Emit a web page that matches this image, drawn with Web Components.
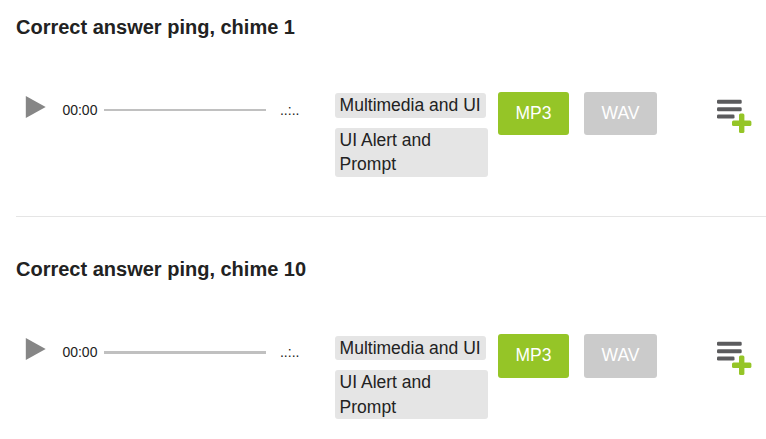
<!DOCTYPE html>
<html lang="en">
<head>
<meta charset="utf-8">
<title>Sounds</title>
<style>
  body {
    margin: 0;
    background: #fff;
    color: #222;
    font-family: "Liberation Sans", Arial, sans-serif;
    overflow: hidden;
  }
</style>
</head>
<body>
<sound-list>
  <sound-item>
    <span slot="title">Correct answer ping, chime 1</span>
    <sound-tag slot="tags">Multimedia and UI</sound-tag>
    <sound-tag slot="tags">UI Alert and Prompt</sound-tag>
  </sound-item>
  <sound-item>
    <span slot="title">Correct answer ping, chime 10</span>
    <sound-tag slot="tags">Multimedia and UI</sound-tag>
    <sound-tag slot="tags">UI Alert and Prompt</sound-tag>
  </sound-item>
</sound-list>

<script>
function attach(element, html) {
  element.attachShadow({mode: 'open'}).innerHTML = html;
}

class SoundList extends HTMLElement {
  constructor() {
    super();
    attach(this, `
      <style>
        :host {
          display: flex;
          flex-direction: column;
          gap: 25.5px;
          padding-left: 16px;
        }
        ::slotted(:not(:last-child)) { border-bottom: 1px solid #e5e5e5; }
      </style>
      <slot></slot>
    `);
  }
}

// One sound: title on top, then player, tags, downloads and playlist button.
class SoundItem extends HTMLElement {
  constructor() {
    super();
    attach(this, `
      <style>
        :host {
          display: block;
          box-sizing: border-box;
          height: 217px;
          padding-top: 15.8px;
        }
        h3 {
          margin: 0 0 53px;
          font-size: 20px;
          line-height: 23px;
        }
        .row {
          display: grid;
          grid-template-columns: 319px 163px 219px 1fr;
          align-items: start;
        }
        .tags {
          display: flex;
          flex-direction: column;
          align-items: flex-start;
          gap: 10px;
          width: 153px;
          padding-top: 1.4px;
        }
        .downloads { display: flex; gap: 15px; }
      </style>
      <h3><slot name="title"></slot></h3>
      <div class="row">
        <audio-player></audio-player>
        <div class="tags"><slot name="tags"></slot></div>
        <div class="downloads">
          <download-button style="width: 71px" primary>MP3</download-button>
          <download-button style="width: 73px">WAV</download-button>
        </div>
        <playlist-add></playlist-add>
      </div>
    `);
  }
}

class AudioPlayer extends HTMLElement {
  constructor() {
    super();
    attach(this, `
      <style>
        :host {
          display: flex;
          align-items: center;
          height: 36.4px;
          font-size: 14px;
        }
        svg { margin: -6px 16.4px 0 9px; flex: none; }
        .time { width: 41.6px; flex: none; }
        .track { width: 162px; height: 2.4px; background: #c0c0c0; }
        .length { margin-left: 14px; }
      </style>
      <svg width="21" height="22" viewBox="0 0 21 22">
        <path d="M.8 0L20.7 11L.8 22Z" fill="#868686"/>
      </svg>
      <span class="time">00:00</span>
      <div class="track"></div>
      <span class="length">..:..</span>
    `);
  }
}

class SoundTag extends HTMLElement {
  constructor() {
    super();
    attach(this, `
      <style>
        :host {
          display: block;
          box-sizing: border-box;
          padding: 0 5.4px 0 4.6px;
          border-radius: 3px;
          background: #e5e5e5;
          font-size: 17.5px;
          line-height: 24.5px;
        }
      </style>
      <slot></slot>
    `);
  }
}

class DownloadButton extends HTMLElement {
  constructor() {
    super();
    attach(this, `
      <style>
        :host {
          display: block;
          height: 43.4px;
          border-radius: 3px;
          background: #cbcbcb;
          color: #fff;
          font-size: 17.5px;
          line-height: 43.4px;
          text-align: center;
        }
        :host([primary]) { background: #95c527; }
      </style>
      <slot></slot>
    `);
  }
}

class PlaylistAdd extends HTMLElement {
  constructor() {
    super();
    attach(this, `
      <style>
        :host { display: block; padding-top: 7px; }
        svg { display: block; }
      </style>
      <svg width="35" height="35" viewBox="0 0 35 35">
        <g fill="#5b5b5d">
          <rect x="0" y=".8" width="24.7" height="4" rx="1.3"/>
          <rect x="0" y="8.2" width="24.7" height="4" rx="1.3"/>
          <rect x="0" y="15.5" width="17.5" height="4" rx="1.3"/>
        </g>
        <g fill="#95c527">
          <rect x="22" y="14.6" width="5.4" height="19.4" rx="1.5"/>
          <rect x="15" y="21.6" width="19.4" height="5.4" rx="1.5"/>
        </g>
      </svg>
    `);
  }
}

customElements.define('sound-list', SoundList);
customElements.define('sound-item', SoundItem);
customElements.define('audio-player', AudioPlayer);
customElements.define('sound-tag', SoundTag);
customElements.define('download-button', DownloadButton);
customElements.define('playlist-add', PlaylistAdd);
</script>
</body>
</html>
